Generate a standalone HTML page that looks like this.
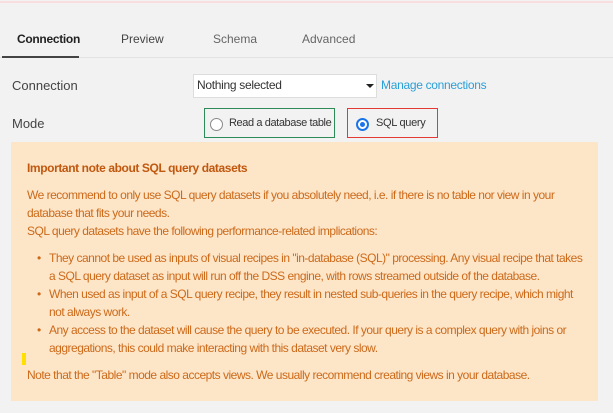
<!DOCTYPE html>
<html><head><meta charset="utf-8"><style>
body{margin:0;width:613px;height:413px;background:#f2f2f2;font-family:"Liberation Sans",sans-serif;position:relative;overflow:hidden}
.a{position:absolute;white-space:nowrap;box-sizing:border-box}
.t{font-size:12px;color:#333}
.n{font-size:12px;color:#cc6a1a;letter-spacing:-0.5px}
</style></head><body>
<div class="a" style="left:0;top:1px;width:613px;height:2px;background:#f8dede"></div>
<div class="a" style="left:0;top:57px;width:613px;height:1px;background:#e2e2e2"></div>
<div class="a" style="left:2px;top:56px;width:77px;height:2px;background:#444"></div>
<div class="a t" style="left:17px;top:32px;font-weight:bold;color:#222;letter-spacing:-0.3px">Connection</div>
<div class="a t" style="left:121px;top:32px;color:#444">Preview</div>
<div class="a t" style="left:213px;top:32px;color:#666">Schema</div>
<div class="a t" style="left:302px;top:32px;color:#666">Advanced</div>
<div class="a t" style="left:12px;top:78px;font-size:13px;color:#444">Connection</div>
<div class="a t" style="left:12px;top:116px;font-size:13px;color:#444">Mode</div>
<div class="a" style="left:193px;top:74px;width:184px;height:24px;background:#fff;border:1px solid #ddd"></div>
<div class="a t" style="left:197px;top:78px;color:#333;letter-spacing:-0.3px">Nothing selected</div>
<div class="a" style="left:366px;top:84px;width:8px;height:4px;border-left:4px solid transparent;border-right:4px solid transparent;border-top:4px solid #222"></div>
<div class="a t" style="left:381px;top:78px;color:#2a9fd6;letter-spacing:-0.3px">Manage connections</div>
<div class="a" style="left:204px;top:108px;width:131px;height:30px;border:1px solid #2e8b57"></div>
<div class="a" style="left:210px;top:118px;width:13px;height:13px;border:1px solid #888;border-radius:50%;background:#fff"></div>
<div class="a t" style="left:229px;top:117px;font-size:11px;letter-spacing:-0.4px">Read a database table</div>
<div class="a" style="left:347px;top:108px;width:91px;height:30px;border:1px solid #e53935"></div>
<div class="a" style="left:356px;top:118px;width:13px;height:13px;border:2px solid #1a73e8;border-radius:50%;background:#fff"></div>
<div class="a" style="left:360px;top:122px;width:5px;height:5px;border-radius:50%;background:#1a73e8"></div>
<div class="a t" style="left:376px;top:117px;font-size:11px;letter-spacing:-0.3px">SQL query</div>
<div class="a" style="left:11px;top:142px;width:587px;height:259px;background:#fde5c8"></div>
<div class="a n" style="left:27px;top:161px;font-weight:bold;font-size:12px;letter-spacing:-0.4px;color:#c0580f">Important note about SQL query datasets</div>
<div class="a n" style="left:27px;top:188px">We recommend to only use SQL query datasets if you absolutely need, i.e. if there is no table nor view in your</div>
<div class="a n" style="left:27px;top:206px">database that fits your needs.</div>
<div class="a n" style="left:27px;top:224px">SQL query datasets have the following performance-related implications:</div>
<div class="a n" style="left:37px;top:251px">•</div>
<div class="a n" style="left:49px;top:251px">They cannot be used as inputs of visual recipes in "in-database (SQL)" processing. Any visual recipe that takes</div>
<div class="a n" style="left:49px;top:269px">a SQL query dataset as input will run off the DSS engine, with rows streamed outside of the database.</div>
<div class="a n" style="left:37px;top:287px">•</div>
<div class="a n" style="left:49px;top:287px">When used as input of a SQL query recipe, they result in nested sub-queries in the query recipe, which might</div>
<div class="a n" style="left:49px;top:305px">not always work.</div>
<div class="a n" style="left:37px;top:323px">•</div>
<div class="a n" style="left:49px;top:323px">Any access to the dataset will cause the query to be executed. If your query is a complex query with joins or</div>
<div class="a n" style="left:49px;top:341px">aggregations, this could make interacting with this dataset very slow.</div>
<div class="a" style="left:22px;top:353px;width:4px;height:12px;background:#ffe000"></div>
<div class="a n" style="left:27px;top:368px">Note that the "Table" mode also accepts views. We usually recommend creating views in your database.</div>
</body></html>
